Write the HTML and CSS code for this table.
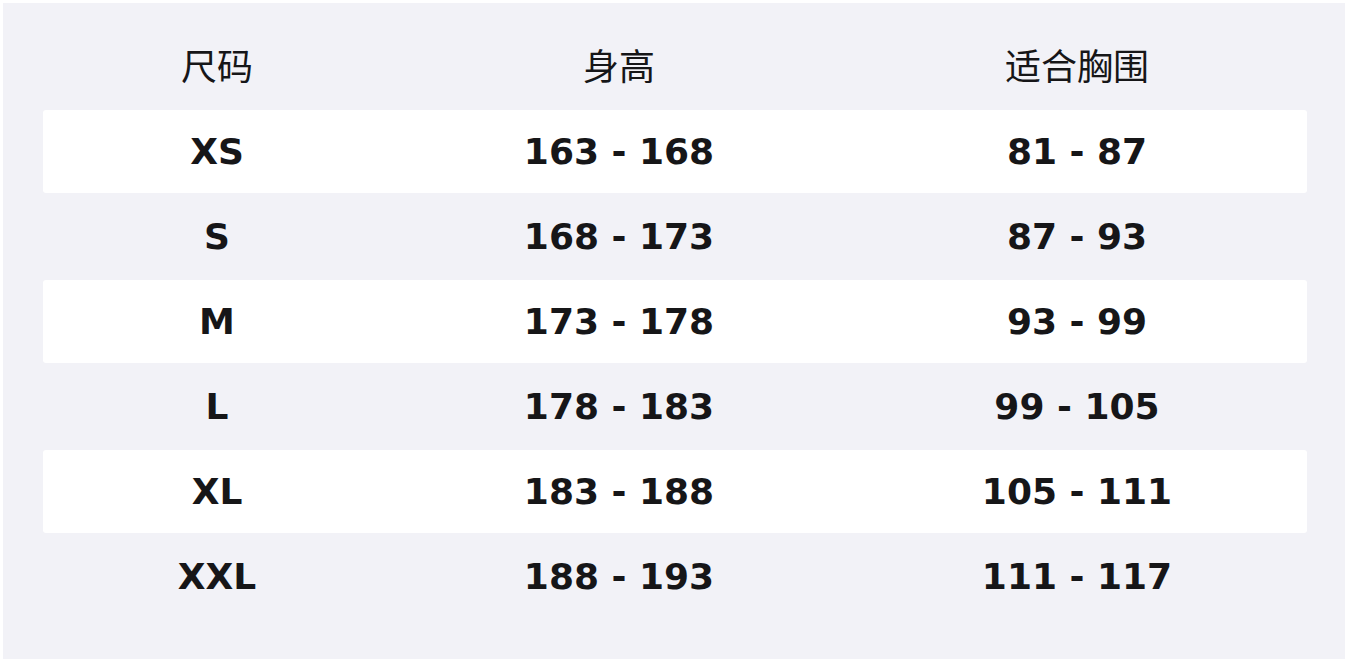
FILE: index.html
```html
<!DOCTYPE html>
<html lang="zh-CN">
<head>
<meta charset="utf-8">
<title>尺码表</title>
<link rel="stylesheet" href="styles.css">
</head>
<body>
<div class="sheet">
  <div class="row head"><div>尺码</div><div>身高</div><div>适合胸围</div></div>
  <div class="row alt"><div>XS</div><div>163 - 168</div><div>81 - 87</div></div>
  <div class="row"><div>S</div><div>168 - 173</div><div>87 - 93</div></div>
  <div class="row alt"><div>M</div><div>173 - 178</div><div>93 - 99</div></div>
  <div class="row"><div>L</div><div>178 - 183</div><div>99 - 105</div></div>
  <div class="row alt"><div>XL</div><div>183 - 188</div><div>105 - 111</div></div>
  <div class="row"><div>XXL</div><div>188 - 193</div><div>111 - 117</div></div>
</div>
</body>
</html>
```
FILE: styles.css
```css
html, body {
  margin: 0;
  background: #ffffff;
}
body {
  padding: 3px 5px 4px 3px;
  font-family: "DejaVu Sans", "Noto Sans CJK SC", sans-serif;
  color: #161618;
}
.sheet {
  background: #f2f2f7;
  padding: 22px 38px 41px 40px;
  display: flex;
  flex-direction: column;
  gap: 2px;
}
.row {
  display: grid;
  grid-template-columns: 348px 456px 1fr;
  height: 83px;
  align-items: center;
  text-align: center;
  font-size: 36px;
  font-weight: 700;
  border-radius: 3px;
}
.row.head {
  font-weight: 400;
  font-family: "Noto Sans CJK SC", sans-serif;
  font-size: 36px;
  padding-bottom: 6px;
  box-sizing: border-box;
}
.row.alt {
  background: #ffffff;
}
```
